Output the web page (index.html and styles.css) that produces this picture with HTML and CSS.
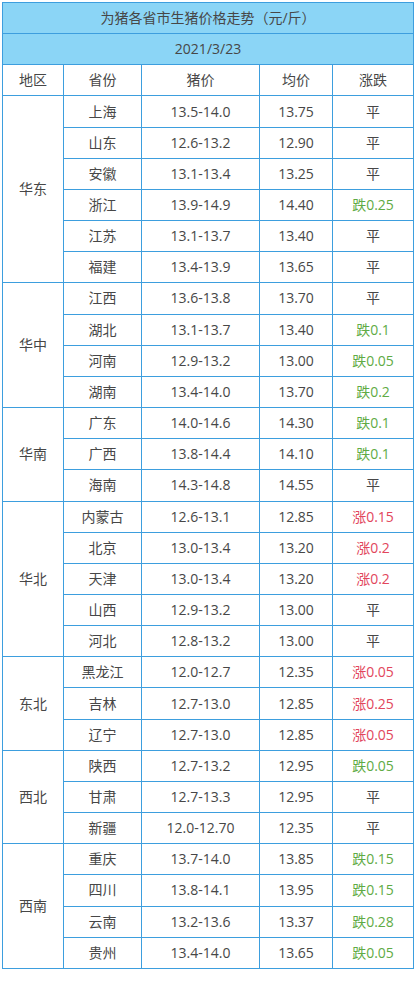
FILE: index.html
```html
<!DOCTYPE html>
<html lang="zh">
<head>
<meta charset="utf-8">
<link rel="stylesheet" href="styles.css">
</head>
<body>
<div class="wrap">
<table class="price">
<colgroup><col class="c1"><col class="c2"><col class="c3"><col class="c4"><col class="c5"></colgroup>
<tr class="head"><td colspan="5">为猪各省市生猪价格走势（元/斤）</td></tr>
<tr class="head"><td colspan="5">2021/3/23</td></tr>
<tr><td>地区</td><td>省份</td><td>猪价</td><td>均价</td><td>涨跌</td></tr>
<tr><td rowspan="6">华东</td><td>上海</td><td>13.5-14.0</td><td>13.75</td><td>平</td></tr>
<tr><td>山东</td><td>12.6-13.2</td><td>12.90</td><td>平</td></tr>
<tr><td>安徽</td><td>13.1-13.4</td><td>13.25</td><td>平</td></tr>
<tr><td>浙江</td><td>13.9-14.9</td><td>14.40</td><td class="down">跌0.25</td></tr>
<tr><td>江苏</td><td>13.1-13.7</td><td>13.40</td><td>平</td></tr>
<tr><td>福建</td><td>13.4-13.9</td><td>13.65</td><td>平</td></tr>
<tr><td rowspan="4">华中</td><td>江西</td><td>13.6-13.8</td><td>13.70</td><td>平</td></tr>
<tr><td>湖北</td><td>13.1-13.7</td><td>13.40</td><td class="down">跌0.1</td></tr>
<tr><td>河南</td><td>12.9-13.2</td><td>13.00</td><td class="down">跌0.05</td></tr>
<tr><td>湖南</td><td>13.4-14.0</td><td>13.70</td><td class="down">跌0.2</td></tr>
<tr><td rowspan="3">华南</td><td>广东</td><td>14.0-14.6</td><td>14.30</td><td class="down">跌0.1</td></tr>
<tr><td>广西</td><td>13.8-14.4</td><td>14.10</td><td class="down">跌0.1</td></tr>
<tr><td>海南</td><td>14.3-14.8</td><td>14.55</td><td>平</td></tr>
<tr><td rowspan="5">华北</td><td>内蒙古</td><td>12.6-13.1</td><td>12.85</td><td class="up">涨0.15</td></tr>
<tr><td>北京</td><td>13.0-13.4</td><td>13.20</td><td class="up">涨0.2</td></tr>
<tr><td>天津</td><td>13.0-13.4</td><td>13.20</td><td class="up">涨0.2</td></tr>
<tr><td>山西</td><td>12.9-13.2</td><td>13.00</td><td>平</td></tr>
<tr><td>河北</td><td>12.8-13.2</td><td>13.00</td><td>平</td></tr>
<tr><td rowspan="3">东北</td><td>黑龙江</td><td>12.0-12.7</td><td>12.35</td><td class="up">涨0.05</td></tr>
<tr><td>吉林</td><td>12.7-13.0</td><td>12.85</td><td class="up">涨0.25</td></tr>
<tr><td>辽宁</td><td>12.7-13.0</td><td>12.85</td><td class="up">涨0.05</td></tr>
<tr><td rowspan="3">西北</td><td>陕西</td><td>12.7-13.2</td><td>12.95</td><td class="down">跌0.05</td></tr>
<tr><td>甘肃</td><td>12.7-13.3</td><td>12.95</td><td>平</td></tr>
<tr><td>新疆</td><td>12.0-12.70</td><td>12.35</td><td>平</td></tr>
<tr><td rowspan="4">西南</td><td>重庆</td><td>13.7-14.0</td><td>13.85</td><td class="down">跌0.15</td></tr>
<tr><td>四川</td><td>13.8-14.1</td><td>13.95</td><td class="down">跌0.15</td></tr>
<tr><td>云南</td><td>13.2-13.6</td><td>13.37</td><td class="down">跌0.28</td></tr>
<tr><td>贵州</td><td>13.4-14.0</td><td>13.65</td><td class="down">跌0.05</td></tr>
</table>
</div>
</body>
</html>
```
FILE: styles.css
```css
html, body {
  margin: 0;
  padding: 0;
  background: #ffffff;
}
.wrap {
  padding: 2px;
}
.price {
  border-collapse: collapse;
  table-layout: fixed;
  width: 411px;
  height: 967px;
  font-family: "Open Sans", "Noto Sans CJK SC", sans-serif;
  font-size: 14px;
  color: #474747;
}
.c1 { width: 61px; }
.c2 { width: 78px; }
.c3 { width: 118px; }
.c4 { width: 73px; }
.c5 { width: 81px; }
.price td {
  border: 1px solid #3d9ede;
  text-align: center;
  vertical-align: middle;
  padding: 0;
  height: 30px;
  line-height: 20px;
}
.price tr.head td {
  background: #8bd5f6;
}
.price td.down {
  color: #5fab45;
}
.price td.up {
  color: #e2465c;
}
```
